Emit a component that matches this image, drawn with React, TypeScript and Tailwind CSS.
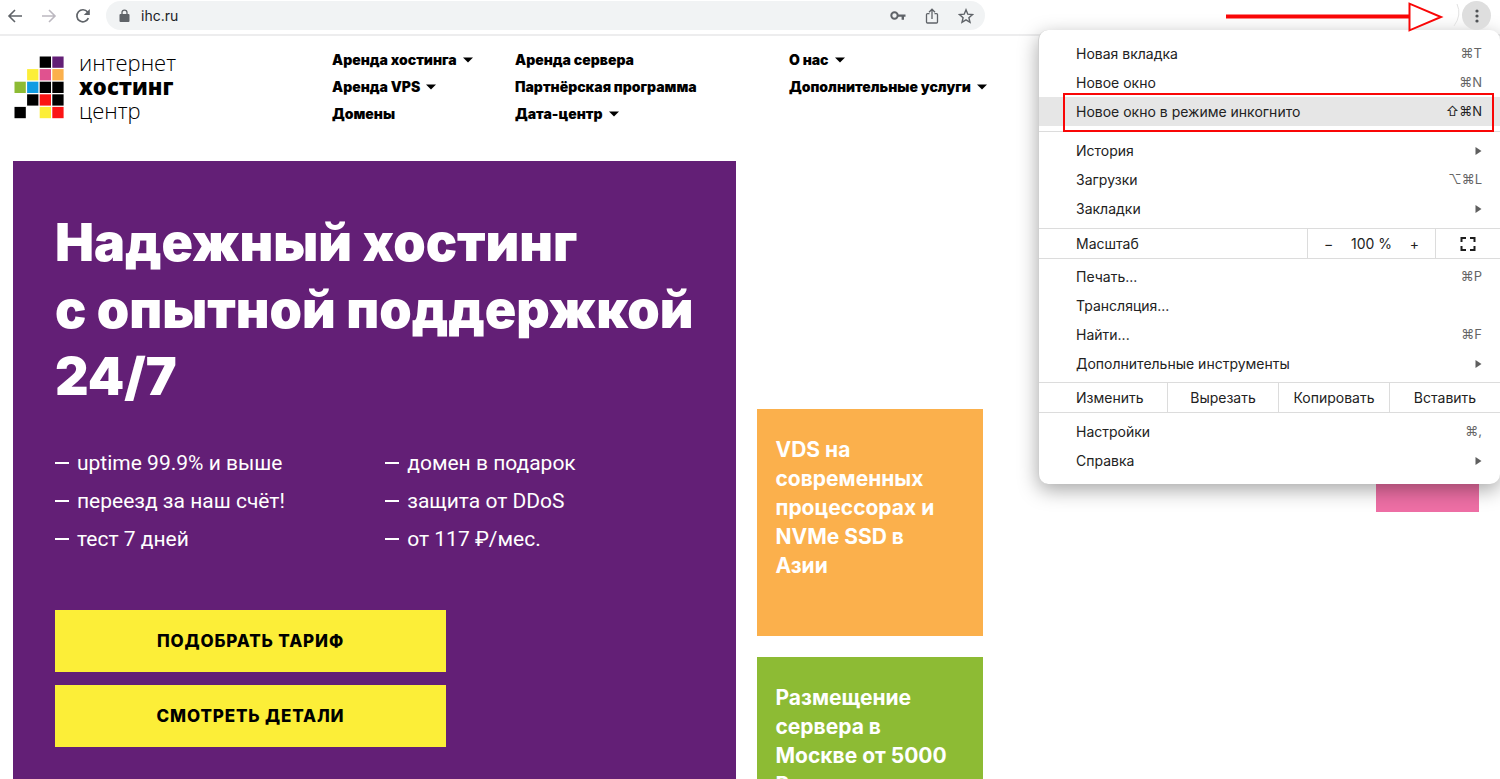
import { ReactNode } from "react";

type MenuEntry = { label: string; shortcut?: string; submenu?: boolean; active?: boolean };
type NavLink = { label: string; dropdown?: boolean };

const navColumns: NavLink[][] = [
  [{ label: "Аренда хостинга", dropdown: true }, { label: "Аренда VPS", dropdown: true }, { label: "Домены" }],
  [{ label: "Аренда сервера" }, { label: "Партнёрская программа" }, { label: "Дата-центр", dropdown: true }],
  [{ label: "О нас", dropdown: true }, { label: "Дополнительные услуги", dropdown: true }],
];

const features = [
  "uptime 99.9% и выше",
  "домен в подарок",
  "переезд за наш счёт!",
  "защита от DDoS",
  "тест 7 дней",
  "от 117 ₽/мес.",
];

// column, row, color
const logoCells: [number, number, string][] = [
  [2, 0, "#000"],
  [3, 0, "#631f76"],
  [1, 1, "#fcee38"],
  [2, 1, "#e0528f"],
  [3, 1, "#fbb04c"],
  [0, 2, "#8dbb34"],
  [1, 2, "#0f9be3"],
  [2, 2, "#000"],
  [3, 2, "#000"],
  [1, 3, "#000"],
  [2, 3, "#fb1414"],
  [3, 3, "#000"],
  [0, 4, "#000"],
  [2, 4, "#fcee38"],
  [3, 4, "#fb1414"],
];

const Toolbar = () => (
  <div className="flex h-9 items-start border-b-2 border-[#ededee] bg-white">
    <div className="flex h-[31px] w-[106px] shrink-0 items-center gap-[18px] pl-[7px] text-[#5f6368]">
      <button aria-label="Назад">
        <svg width="16" height="16" viewBox="0 0 16 16" fill="none" stroke="currentColor" strokeWidth="1.6">
          <path d="M15 8H2.5M8 2 2 8l6 6" />
        </svg>
      </button>
      <button aria-label="Вперёд" className="text-[#bcb8c0]">
        <svg width="16" height="16" viewBox="0 0 16 16" fill="none" stroke="currentColor" strokeWidth="1.6">
          <path d="M1 8h12.500M8 2l6 6-6 6" />
        </svg>
      </button>
      <button aria-label="Обновить">
        <svg width="16" height="16" viewBox="0 0 16 16">
          <path d="M13.400 10.200A6 6 0 1 1 12.600 4" fill="none" stroke="currentColor" strokeWidth="1.700" />
          <path d="M14.800 1v6H8.800z" fill="currentColor" />
        </svg>
      </button>
    </div>
    <div className="mt-px flex h-[29px] flex-1 items-center rounded-full bg-[#f1f3f4] pr-[11px] pl-[13px] text-[#5f6368]">
      <svg width="11" height="14" viewBox="0 0 11 14" className="shrink-0">
        <path d="M1.500 5h8a1 1 0 0 1 1 1v6a1 1 0 0 1-1 1h-8a1 1 0 0 1-1-1V6a1 1 0 0 1 1-1z" fill="currentColor" />
        <path d="M3 5.500V3.600a2.500 2.500 0 0 1 5 0v1.900" fill="none" stroke="currentColor" strokeWidth="1.300" />
      </svg>
      <input
        aria-label="Адрес"
        defaultValue="ihc.ru"
        className="ml-[11px] min-w-0 flex-1 bg-transparent text-sm text-[#202124] outline-none"
      />
      <div className="flex items-center gap-[18px]">
        <button aria-label="Пароли">
          <svg width="16" height="16" viewBox="0 0 16 16">
            <circle cx="4.500" cy="7.500" r="3.200" fill="none" stroke="currentColor" strokeWidth="2" />
            <path d="M8 6.500h7.500v2.200H14v3h-2.400v-3H8z" fill="currentColor" />
          </svg>
        </button>
        <button aria-label="Поделиться">
          <svg width="16" height="16" viewBox="0 0 16 16" fill="none" stroke="currentColor" strokeWidth="1.300">
            <path d="M5.500 5.600H3.500a1 1 0 0 0-1 1V14a1 1 0 0 0 1 1h9a1 1 0 0 0 1-1V6.600a1 1 0 0 0-1-1h-2M8 11V1.500M5 4.200l3-3 3 3" />
          </svg>
        </button>
        <button aria-label="В закладки">
          <svg width="16" height="16" viewBox="0 0 16 16" fill="none" stroke="currentColor" strokeWidth="1.400">
            <path d="m8 1.800 1.800 4.400 4.700.4-3.600 3.100 1.100 4.600L8 11.800l-4 2.500 1.100-4.600L1.500 6.600l4.700-.4z" />
          </svg>
        </button>
      </div>
    </div>
    <div className="relative z-10 flex w-[515px] shrink-0 items-start justify-end gap-[2px] pr-[9px]">
      <svg width="234" height="33" viewBox="0 0 234 33" fill="none">
        <path d="M0 14.500h183v4H0z" fill="#f90606" />
        <path d="M183.500 3.700v26.600L215 17z" fill="#fff" stroke="#f90606" strokeWidth="2" />
        <path d="M231 4q5 11-3 22" stroke="#e2e2e2" />
      </svg>
      <button aria-label="Меню" className="mt-px flex size-[29px] items-center justify-center rounded-full bg-[#dedede]">
        <svg width="4" height="14" viewBox="0 0 4 14" fill="#505356">
          <circle cx="2" cy="2" r="1.600" />
          <circle cx="2" cy="7" r="1.600" />
          <circle cx="2" cy="12" r="1.600" />
        </svg>
      </button>
    </div>
  </div>
);

const Logo = () => (
  <a href="#" className="flex items-start gap-[15px]">
    <svg width="50" height="64" viewBox="0 0 50 64" className="mt-[6px]">
      {logoCells.map(([x, y, color]) => (
        <rect key={`${x}-${y}`} x={0.5 + x * 12.6} y={0.5 + y * 12.6} width="11.300" height="11.300" fill={color} />
      ))}
    </svg>
    <span className="flex flex-col font-['Open_Sans',sans-serif] text-[22px] leading-6 font-light">
      <span>интернет</span>
      <span className="font-extrabold">хостинг</span>
      <span>центр</span>
    </span>
  </a>
);

const SiteHeader = () => (
  <header className="grid grid-cols-[318px_183px_274px_1fr] px-[14px] pt-[10px] text-black">
    <div className="pt-1">
      <Logo />
    </div>
    {navColumns.map((column, index) => (
      <nav key={index} className="flex flex-col items-start">
        {column.map((link) => (
          <a
            key={link.label}
            href="#"
            className="flex items-center gap-[6px] text-sm leading-[27px] font-black whitespace-nowrap"
          >
            {link.label}
            {link.dropdown && (
              <svg width="10" height="6" viewBox="0 0 10 6">
                <path d="M0 .5h10L5 5.500z" fill="currentColor" />
              </svg>
            )}
          </a>
        ))}
      </nav>
    ))}
  </header>
);

const Hero = () => (
  <section className="col-span-6 row-span-6 bg-[#631f76] px-[42px] pt-12 text-white">
    <h1 className="text-[52px] leading-[67px] font-black whitespace-nowrap">
      Надежный хостинг
      <br />с опытной поддержкой
      <br />
      24/7
    </h1>
    <ul className="mt-[34px] grid grid-cols-2 gap-x-[22px] font-[Roboto,sans-serif] text-[21px] leading-[38px]">
      {features.map((feature) => (
        <li key={feature} className="flex items-center gap-2">
          <span className="h-[2px] w-[14px] bg-white" />
          {feature}
        </li>
      ))}
    </ul>
    <div className="mt-[52px] flex w-[391px] flex-col gap-[13px] text-black">
      <button className="h-[62px] bg-[#fcee38] pt-[2px] text-[17px] font-extrabold tracking-wider uppercase">
        Подобрать тариф
      </button>
      <button className="h-[62px] bg-[#fcee38] pt-[2px] text-[17px] font-extrabold tracking-wider uppercase">
        Смотреть детали
      </button>
    </div>
  </section>
);

const Tile = ({ className, children }: { className: string; children: ReactNode }) => (
  <a href="#" className={`pt-[26px] pr-7 pl-[19px] text-[21px] leading-[29px] font-bold text-white ${className}`}>
    {children}
  </a>
);

const MenuRow = ({ label, shortcut, submenu, active }: MenuEntry) => (
  <button
    role="menuitem"
    className={`flex h-[29px] w-full items-center justify-between pr-[18px] pl-[37px] ${active ? "bg-[#e6e6e6]" : ""}`}
  >
    <span>{label}</span>
    {shortcut && <span className={active ? "text-[13px]" : "text-[13px] text-[#656565]"}>{shortcut}</span>}
    {submenu && (
      <svg width="7" height="8" viewBox="0 0 7 8">
        <path d="M.5 0v8l6-4z" fill="#5f5f5f" />
      </svg>
    )}
  </button>
);

const BrowserMenu = () => (
  <div
    role="menu"
    className="absolute top-[30px] right-0 w-[462px] rounded-[10px] border-l border-[#d0d0d0] bg-white text-sm text-[#222] shadow-[0_6px_20px_rgba(0,0,0,0.35)]"
  >
    <div className="pt-[9px] pb-[5px]">
      <MenuRow label="Новая вкладка" shortcut="⌘T" />
      <MenuRow label="Новое окно" shortcut="⌘N" />
      <MenuRow label="Новое окно в режиме инкогнито" shortcut="⇧⌘N" active />
    </div>
    <div className="border-t border-[#dcdcdc] pt-1 pb-[5px]">
      <MenuRow label="История" submenu />
      <MenuRow label="Загрузки" shortcut="⌥⌘L" />
      <MenuRow label="Закладки" submenu />
    </div>
    <div className="flex h-[31px] border-y border-[#dcdcdc]">
      <span className="flex flex-1 items-center pl-[37px]">Масштаб</span>
      <div className="flex w-32 items-center justify-between border-l border-[#dcdcdc] px-4">
        <button aria-label="Уменьшить">−</button>
        <span>100 %</span>
        <button aria-label="Увеличить">+</button>
      </div>
      <button
        aria-label="Во весь экран"
        className="flex w-[65px] items-center justify-center border-l border-[#dcdcdc]"
      >
        <svg width="16" height="16" viewBox="0 0 16 16" fill="none" stroke="#1d1d1d" strokeWidth="2">
          <path d="M1.500 6V2H6M10 2h4.500v4M14.500 10v4H10M6 14H1.500v-4" />
        </svg>
      </button>
    </div>
    <div className="pt-[3px] pb-1">
      <MenuRow label="Печать..." shortcut="⌘P" />
      <MenuRow label="Трансляция..." />
      <MenuRow label="Найти..." shortcut="⌘F" />
      <MenuRow label="Дополнительные инструменты" submenu />
    </div>
    <div className="flex h-[31px] border-y border-[#dcdcdc]">
      <span className="flex flex-1 items-center pl-[37px]">Изменить</span>
      <button className="w-[111px] border-l border-[#dcdcdc]">Вырезать</button>
      <button className="w-[111px] border-l border-[#dcdcdc]">Копировать</button>
      <button className="w-[111px] border-l border-[#dcdcdc]">Вставить</button>
    </div>
    <div className="pt-1 pb-[9px]">
      <MenuRow label="Настройки" shortcut="⌘," />
      <MenuRow label="Справка" submenu />
    </div>
    <div className="pointer-events-none absolute top-[63px] right-[6px] left-6 h-[39px] border-2 border-[#f90606]" />
  </div>
);

const App = () => {
  return (
    <div className="relative h-screen overflow-hidden bg-white font-[Inter,'DejaVu_Sans',sans-serif]">
      <Toolbar />
      <SiteHeader />
      <main className="mt-[34px] grid auto-rows-[103px] grid-cols-12 gap-[21px] pr-[21px] pl-[13px]">
        <Hero />
        <Tile className="col-span-2 col-start-7 row-span-2 row-start-3 bg-[#fbb04c]">
          VDS на современных процессорах и NVMe SSD в Азии
        </Tile>
        <Tile className="col-span-2 col-start-7 row-span-2 row-start-5 bg-[#8dbb34]">
          Размещение сервера в Москве от 5000 Р
        </Tile>
        <div className="col-start-12 row-start-3 bg-[#ee6fa5]" />
      </main>
      <BrowserMenu />
    </div>
  );
};

export default App;
